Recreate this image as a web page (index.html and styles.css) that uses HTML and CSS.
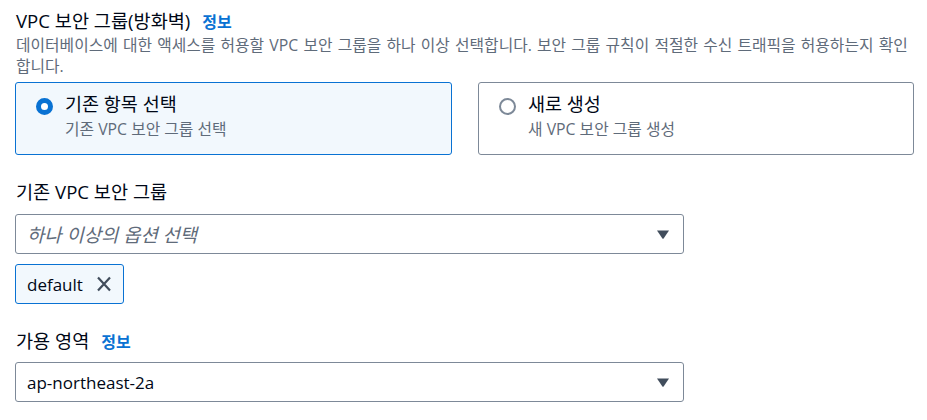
FILE: index.html
```html
<!DOCTYPE html>
<html lang="ko">
<head>
<meta charset="utf-8">
<link rel="stylesheet" href="styles.css">
</head>
<body>
<div class="page">
  <section class="field">
    <div class="label-row">
      <span class="label">VPC 보안 그룹(방화벽)</span>
      <a class="info">정보</a>
    </div>
    <p class="desc">데이터베이스에 대한 액세스를 허용할 VPC 보안 그룹을 하나 이상 선택합니다. 보안 그룹 규칙이 적절한 수신 트래픽을 허용하는지 확인합니다.</p>
    <div class="tiles">
      <div class="tile selected">
        <span class="radio checked"></span>
        <div class="tile-text">
          <div class="tile-title">기존 항목 선택</div>
          <div class="tile-sub">기존 VPC 보안 그룹 선택</div>
        </div>
      </div>
      <div class="tile">
        <span class="radio"></span>
        <div class="tile-text">
          <div class="tile-title">새로 생성</div>
          <div class="tile-sub">새 VPC 보안 그룹 생성</div>
        </div>
      </div>
    </div>
  </section>

  <section class="field sg">
    <div class="label-row"><span class="label">기존 VPC 보안 그룹</span></div>
    <div class="select">
      <span class="placeholder">하나 이상의 옵션 선택</span>
      <svg class="caret" width="12" height="9" viewBox="0 0 12 9"><path d="M0 0.5 H12 L6.6 8.4 Q6 9 5.4 8.4 Z" fill="#414d5c"/></svg>
    </div>
    <div class="token">
      <span class="token-label">default</span>
      <svg class="x" width="16" height="16" viewBox="0 0 16 16"><path d="M2 1.5 L14 14.5 M14 1.5 L2 14.5" stroke="#414d5c" stroke-width="2.2" fill="none"/></svg>
    </div>
  </section>

  <section class="field az">
    <div class="label-row">
      <span class="label">가용 영역</span>
      <a class="info">정보</a>
    </div>
    <div class="select">
      <span class="value">ap-northeast-2a</span>
      <svg class="caret" width="12" height="9" viewBox="0 0 12 9"><path d="M0 0.5 H12 L6.6 8.4 Q6 9 5.4 8.4 Z" fill="#414d5c"/></svg>
    </div>
  </section>
</div>
</body>
</html>
```

FILE: styles.css
```css
* { box-sizing: border-box; }
body {
  margin: 0;
  background: #ffffff;
  font-family: "Open Sans", "Noto Sans CJK KR", sans-serif;
  color: #000716;
}
.page {
  padding: 9px 13px 0 15px;
}
.field { margin: 0; }
.label-row {
  display: flex;
  align-items: baseline;
  gap: 12px;
  padding-left: 1px;
  height: 24px;
}
.label {
  font-size: 18.6px;
  line-height: 24px;
}
.info {
  color: #0972d3;
  font-size: 16px;
  font-weight: 700;
}
.desc {
  margin: 2px 0 0;
  width: 899px;
  padding-left: 1px;
  font-size: 15.8px;
  line-height: 21px;
  word-spacing: 1.1px;
  color: #5f6b7a;
}
.tiles {
  display: grid;
  grid-template-columns: 437px 436px;
  gap: 26px;
  margin-top: 5px;
}
.tile {
  display: flex;
  align-items: flex-start;
  gap: 12px;
  height: 73px;
  padding: 9px 20px;
  border: 1px solid #7d8998;
  border-radius: 3px;
  background: #ffffff;
}
.tile.selected {
  border-color: #0972d3;
  background: #f2f8fd;
}
.radio {
  flex: none;
  width: 17px;
  height: 17px;
  margin-top: 6px;
  border: 2px solid #7d8998;
  border-radius: 50%;
  background: #ffffff;
}
.radio.checked {
  border: 5.5px solid #0972d3;
}
.tile-title {
  font-size: 18.5px;
  line-height: 24px;
}
.tile-sub {
  font-size: 15.8px;
  line-height: 26px;
  color: #5f6b7a;
}
.sg { margin-top: 25px; }
.sg .label-row { margin-bottom: 10px; }
.select {
  display: flex;
  align-items: center;
  justify-content: space-between;
  width: 669px;
  height: 40px;
  padding: 0 14px 0 11px;
  border: 1px solid #7d8998;
  border-radius: 3px;
}
.placeholder {
  font-size: 18.8px;
  font-style: italic;
  color: #5f6b7a;
}
.value {
  font-size: 17px;
  color: #000716;
}
.token {
  display: inline-flex;
  align-items: center;
  gap: 13px;
  height: 40px;
  margin-top: 10px;
  padding: 0 11px 0 11px;
  border: 1px solid #0972d3;
  border-radius: 3px;
  background: #f2f8fd;
}
.token-label { font-size: 17px; }
.az { margin-top: 25px; }
.az .label-row { margin-bottom: 9px; }
```
